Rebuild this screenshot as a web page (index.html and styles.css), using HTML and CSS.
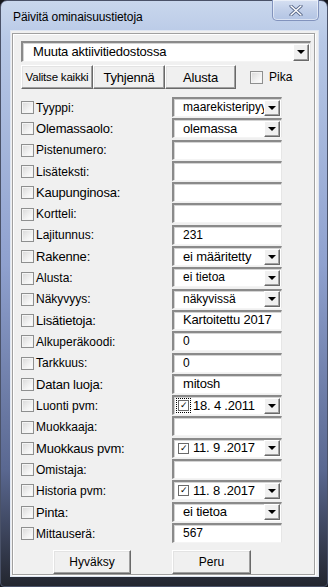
FILE: index.html
```html
<!DOCTYPE html>
<html lang="fi">

<head>
    <meta charset="UTF-8">
    <meta name="viewport" content="width=device-width, initial-scale=1.0">
    <title>Päivitä ominaisuustietoja</title>
    <link rel="stylesheet" href="styles.css">
</head>

<body>
    <div class="window">
        <div class="titlebar">
            <span class="title">Päivitä ominaisuustietoja</span>
            <div class="close">
                <svg width="14" height="11" viewBox="0 0 14 11">
                    <path d="M2 1 L12 10 M12 1 L2 10" stroke="#5a6a8c" stroke-width="3.2" stroke-linecap="round" />
                    <path d="M2 1 L12 10 M12 1 L2 10" stroke="#fff" stroke-width="1.4" stroke-linecap="round" />
                </svg>
            </div>
        </div>
        <div class="client">
            <div class="panel">
                <div class="field combo top-combo l">
                    <span class="val">Muuta aktiivitiedostossa</span>
                    <span class="arrow"></span>
                </div>
                <div class="toolbar">
                    <button class="btn xs w71">Valitse kaikki</button>
                    <button class="btn l w71">Tyhjennä</button>
                    <button class="btn l w70">Alusta</button>
                    <label class="pika"><span class="chk"></span><span class="s">Pika</span></label>
                </div>

                <div class="rows">
                    <div class="lbl"><span class="chk"></span><span class="s">Tyyppi:</span></div>
                    <div class="field combo s"><span class="val">maarekisteripyyk</span><span class="arrow"></span></div>

                    <div class="lbl"><span class="chk"></span><span class="l">Olemassaolo:</span></div>
                    <div class="field combo l"><span class="val">olemassa</span><span class="arrow"></span></div>

                    <div class="lbl"><span class="chk"></span><span class="s">Pistenumero:</span></div>
                    <div class="field"></div>

                    <div class="lbl"><span class="chk"></span><span class="s">Lisäteksti:</span></div>
                    <div class="field"></div>

                    <div class="lbl"><span class="chk"></span><span class="l">Kaupunginosa:</span></div>
                    <div class="field"></div>

                    <div class="lbl"><span class="chk"></span><span class="s">Kortteli:</span></div>
                    <div class="field"></div>

                    <div class="lbl"><span class="chk"></span><span class="s">Lajitunnus:</span></div>
                    <div class="field s"><span class="val">231</span></div>

                    <div class="lbl"><span class="chk"></span><span class="l">Rakenne:</span></div>
                    <div class="field combo l"><span class="val">ei määritetty</span><span class="arrow"></span></div>

                    <div class="lbl"><span class="chk"></span><span class="s">Alusta:</span></div>
                    <div class="field combo s"><span class="val">ei tietoa</span><span class="arrow"></span></div>

                    <div class="lbl"><span class="chk"></span><span class="s">Näkyvyys:</span></div>
                    <div class="field combo s"><span class="val">näkyvissä</span><span class="arrow"></span></div>

                    <div class="lbl"><span class="chk"></span><span class="l">Lisätietoja:</span></div>
                    <div class="field l"><span class="val">Kartoitettu 2017</span></div>

                    <div class="lbl"><span class="chk"></span><span class="s">Alkuperäkoodi:</span></div>
                    <div class="field s"><span class="val">0</span></div>

                    <div class="lbl"><span class="chk"></span><span class="s">Tarkkuus:</span></div>
                    <div class="field s"><span class="val">0</span></div>

                    <div class="lbl"><span class="chk"></span><span class="l">Datan luoja:</span></div>
                    <div class="field l"><span class="val">mitosh</span></div>

                    <div class="lbl"><span class="chk"></span><span class="s">Luonti pvm:</span></div>
                    <div class="field combo date l"><span class="mini focus">✓</span><span class="val">18. 4 .2011</span><span class="arrow"></span></div>

                    <div class="lbl"><span class="chk"></span><span class="s">Muokkaaja:</span></div>
                    <div class="field"></div>

                    <div class="lbl"><span class="chk"></span><span class="l">Muokkaus pvm:</span></div>
                    <div class="field combo date l"><span class="mini">✓</span><span class="val">11. 9 .2017</span><span class="arrow"></span></div>

                    <div class="lbl"><span class="chk"></span><span class="s">Omistaja:</span></div>
                    <div class="field"></div>

                    <div class="lbl"><span class="chk"></span><span class="s">Historia pvm:</span></div>
                    <div class="field combo date l"><span class="mini">✓</span><span class="val">11. 8 .2017</span><span class="arrow"></span></div>

                    <div class="lbl"><span class="chk"></span><span class="l">Pinta:</span></div>
                    <div class="field combo l"><span class="val">ei tietoa</span><span class="arrow"></span></div>

                    <div class="lbl"><span class="chk"></span><span class="s">Mittauserä:</span></div>
                    <div class="field s"><span class="val">567</span></div>
                </div>

                <div class="footer">
                    <button class="btn s ok">Hyväksy</button>
                    <button class="btn s cancel">Peru</button>
                </div>
            </div>
        </div>
    </div>
</body>

</html>
```

FILE: styles.css
```css
* {
    box-sizing: border-box;
}

body {
    margin: 0px;
    width: 328px;
    height: 587px;
    overflow: hidden;
    background: #15171c;
    font-family: "Liberation Sans", Arial, sans-serif;
    color: #000;
}

.xs {
    font-size: 11.5px;
    letter-spacing: -0.2px;
}

.s {
    font-size: 12px;
}

.l {
    font-size: 13px;
    letter-spacing: -0.2px;
}

.window {
    height: 587px;
    display: flex;
    flex-direction: column;
    padding: 0px 8px 10px 9px;
    border-radius: 7px 7px 4px 4px;
    border: 1px solid #4a5268;
    background: linear-gradient(#c9d7ed, #b7c8e6 40px, #8fa1cf 45%, #5a6891 80%, #23262f);
}

.titlebar {
    height: 29px;
    display: flex;
    justify-content: space-between;
    flex-shrink: 0;
}

.title {
    font-size: 12px;
    margin-top: 9px;
    margin-left: 3px;
    letter-spacing: -0.1px;
}

.close {
    width: 47px;
    height: 21px;
    margin-top: -1px;
    border: 1px solid #8293bd;
    border-top: none;
    border-radius: 0px 0px 5px 5px;
    background: linear-gradient(#d6e0f2, #c1cfe9 50%, #b3c4e4);
    box-shadow: inset 0px 0px 0px 1px rgba(255, 255, 255, 0.5);
    display: flex;
    align-items: center;
    justify-content: center;
}

.client {
    flex: 1;
    background: #f0f0f0;
    border: 1px solid #dfe6f2;
    padding: 2px 3px 1px 1px;
    display: flex;
}

.panel {
    flex: 1;
    border: 1px solid #a0a0a0;
    box-shadow: inset 1px 1px 0px #fff, 1px 1px 0px #fff;
    padding: 7px 2px 0px 8px;
    display: flex;
    flex-direction: column;
}

/* text boxes and combos */

.field {
    height: 20px;
    background: #fff;
    border-style: solid;
    border-width: 2px 1px 1px 2px;
    border-color: #8a8a8a #e6e6e6 #f4f4f4 #8a8a8a;
    box-shadow: inset 1px 1px 0px #d4d4d4;
    display: flex;
    align-items: center;
    padding-left: 9px;
    overflow: hidden;
    white-space: nowrap;
}

.field .val {
    flex: 1;
    min-width: 0;
    padding-bottom: 1px;
}

.combo {
    padding-right: 1px;
}

.arrow {
    width: 16px;
    height: 16px;
    flex-shrink: 0;
    background: #f0f0f0;
    border-style: solid;
    border-width: 1px;
    border-color: #fff #696969 #696969 #fff;
    box-shadow: inset -1px -1px 0px #a0a0a0;
    position: relative;
}

.arrow::after {
    content: "";
    position: absolute;
    left: 3px;
    top: 5px;
    border-left: 4px solid transparent;
    border-right: 4px solid transparent;
    border-top: 4px solid #000;
}

.top-combo {
    height: 21px;
    margin-right: 1px;
    padding-left: 10px;
}

.top-combo .arrow {
    height: 17px;
}

.date {
    padding-left: 4px;
}

.mini {
    width: 11px;
    height: 11px;
    border: 1px solid #6a6a6a;
    background: #fff;
    font-size: 9px;
    line-height: 9px;
    text-align: center;
    margin-right: 4px;
    flex-shrink: 0;
}

.focus {
    outline: 1px dotted #000;
    outline-offset: 1px;
}

/* buttons */

.toolbar {
    display: flex;
    align-items: center;
    margin-top: 3px;
    height: 24px;
}

.btn {
    height: 24px;
    font-family: "Liberation Sans", Arial, sans-serif;
    background: #f0f0f0;
    border-style: solid;
    border-width: 1px;
    border-color: #fff #696969 #696969 #fff;
    box-shadow: inset -1px -1px 0px #a0a0a0, inset 1px 1px 0px #e3e3e3;
    padding: 0px;
    color: #000;
    white-space: nowrap;
}

.w71 {
    width: 72px;
}

.w70 {
    width: 71px;
}

.pika {
    display: flex;
    align-items: center;
    margin-left: 14px;
    gap: 4px;
}

/* rows */

.rows {
    display: grid;
    grid-template-columns: 151px 110px;
    grid-auto-rows: 21.3px;
    margin-top: 8px;
}

.lbl {
    display: flex;
    align-items: center;
    white-space: nowrap;
}

.chk {
    width: 13px;
    height: 13px;
    border: 1px solid #8e8f8f;
    background: linear-gradient(135deg, #d8d8d8, #f2f2f2 60%, #fff);
    box-shadow: inset 0px 0px 0px 1px #f4f4f4;
    margin-right: 2px;
    flex-shrink: 0;
}

.footer {
    display: grid;
    grid-template-columns: 151px 110px;
    margin-top: 6px;
}

.ok {
    width: 78px;
    margin-left: 32px;
}

.cancel {
    width: 79px;
}
```
